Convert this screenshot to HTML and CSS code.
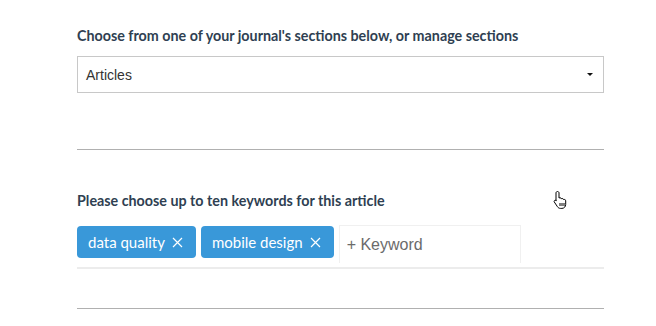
FILE: index.html
```html
<html>
	<head>
		<title>Submission</title>
		<link rel="stylesheet" href="styles.css">
	</head>
	<body>
		<main class="form">
			<section class="field">
				<label for="section" class="field-label">Choose from one of your journal's sections below, or manage sections</label>
				<div class="select">
					<span>Articles</span>
					<span class="caret"></span>
				</div>
			</section>

			<hr>

			<section class="field keywords">
				<label for="keyword" class="field-label">Please choose up to ten keywords for this article</label>
				<div class="tags">
					<span class="tag">data quality
						<svg class="remove" width="11" height="11" viewBox="0 0 11 11"><path d="M1 1l9 9M10 1l-9 9" stroke="#fff" stroke-width="1.2"/></svg>
					</span>
					<span class="tag">mobile design
						<svg class="remove" width="11" height="11" viewBox="0 0 11 11"><path d="M1 1l9 9M10 1l-9 9" stroke="#fff" stroke-width="1.2"/></svg>
					</span>
					<input type="text" id="keyword" class="tag-input" placeholder="+ Keyword">
				</div>
				<svg class="cursor" width="16" height="20" viewBox="0 0 16 20">
					<path d="M4.5 1.5c.8 0 1.5.6 1.5 1.4V8l1-.3c.7 0 1.2.4 1.3 1l.9-.2c.7 0 1.2.4 1.3 1l.8-.1c.8 0 1.4.6 1.4 1.4v3.6c0 2.2-1.6 4-3.8 4H7.4c-1.2 0-2.2-.6-2.9-1.6L1.3 12c-.4-.6-.2-1.3.4-1.6.5-.3 1.1-.2 1.5.3L3 11V2.9c0-.8.7-1.4 1.5-1.4z" fill="#fff" stroke="#000" stroke-width="1"/>
					<path d="M7 13v3M9 13v3M11 13v3" stroke="#000" stroke-width="1"/>
				</svg>
			</section>

			<hr>
		</main>
	</body>
</html>
```

FILE: styles.css
```css
body {
	margin: 0;
	background: #fff;
	font-family: "Lato", sans-serif;
}

.form {
	width: 527px;
	margin-left: 77px;
	padding-top: 28px;
}

.field {
	display: flex;
	flex-direction: column;
}

.field-label {
	font-size: 14.3px;
	font-weight: bold;
	color: #2f3f52;
	line-height: 16px;
}

.select {
	margin-top: 12px;
	height: 37px;
	box-sizing: border-box;
	border: 1px solid #c8c8c8;
	display: flex;
	align-items: center;
	justify-content: space-between;
	padding: 0 10px 0 8px;
	font-family: "Liberation Sans", sans-serif;
	font-size: 14px;
	color: #333;
}

.caret {
	width: 0;
	height: 0;
	border-left: 3px solid transparent;
	border-right: 3px solid transparent;
	border-top: 3px solid #111;
}

hr {
	margin: 56px 0 0 0;
	border: none;
	border-top: 1px solid #b0b0b0;
}

.keywords {
	margin-top: 43px;
	position: relative;
}

.tags {
	margin-top: 17px;
	display: flex;
	align-items: center;
	gap: 5px;
	border-bottom: 2px solid #ececec;
	padding-bottom: 9px;
}

.tag {
	display: flex;
	align-items: center;
	gap: 7px;
	background: #3998d9;
	color: #fff;
	border-radius: 4px;
	height: 32px;
	padding: 0 13px 0 11px;
	font-size: 15px;
	white-space: nowrap;
}

.tag-input {
	width: 182px;
	height: 38px;
	box-sizing: border-box;
	border: 1px solid #f0f0f0;
	border-bottom: none;
	padding: 0 7px;
	font-family: "Liberation Sans", sans-serif;
	font-size: 16px;
	color: #666;
	outline: none;
	margin-top: -2px;
	margin-bottom: -6px;
}

.tag-input::placeholder {
	color: #6b6b6b;
}

.keywords + hr {
	margin-top: 39px;
}

.cursor {
	position: absolute;
	left: 476px;
	top: -3px;
}
```
